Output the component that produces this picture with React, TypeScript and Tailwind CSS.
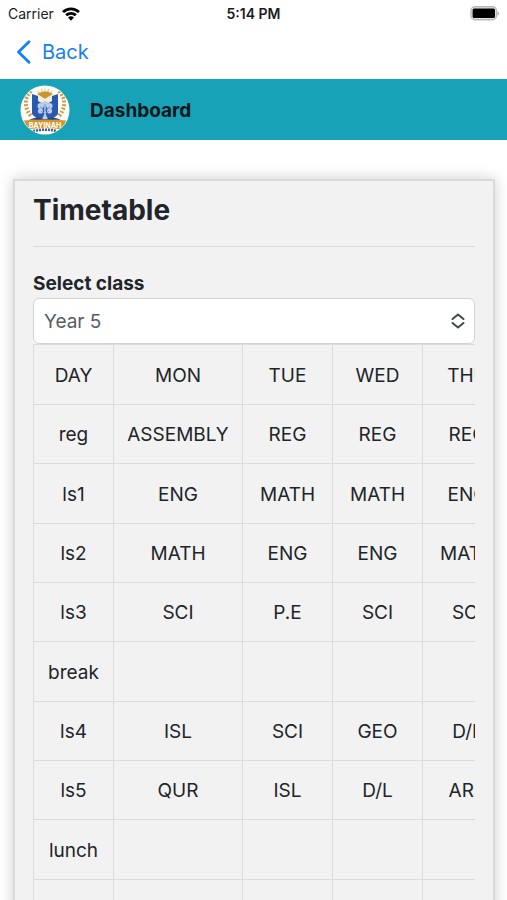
import { useState } from "react";

const days = ["DAY", "MON", "TUE", "WED", "THU", "FRI"];

const lessons = [
  ["reg", "ASSEMBLY", "REG", "REG", "REG", "REG"],
  ["ls1", "ENG", "MATH", "MATH", "ENG", "MATH"],
  ["ls2", "MATH", "ENG", "ENG", "MATH", "ENG"],
  ["ls3", "SCI", "P.E", "SCI", "SCI", "ISL"],
  ["break", "", "", "", "", ""],
  ["ls4", "ISL", "SCI", "GEO", "D/L", "QUR"],
  ["ls5", "QUR", "ISL", "D/L", "ARB", "ARB"],
  ["lunch", "", "", "", "", ""],
  ["ls6", "ARB", "ICT", "HIS", "QUR", ""],
];

function StatusBar() {
  return (
    <div className="grid h-7 shrink-0 grid-cols-3 items-center px-2 text-sm text-[#1c1c1c]">
      <div className="flex items-center gap-2">
        <span>Carrier</span>
        <svg viewBox="0 0 20 15" className="h-[14px] w-[18px]" fill="none" stroke="#000" strokeWidth="3.1">
          <path d="M1.2 5.4a12.4 12.4 0 0 1 17.6 0" />
          <path d="M4.6 9a7.6 7.6 0 0 1 10.8 0" />
          <path d="M10 15 6.7 11.5a4.6 4.6 0 0 1 6.6 0z" fill="#000" stroke="none" />
        </svg>
      </div>
      <span className="text-center font-semibold">5:14 PM</span>
      <svg viewBox="0 0 32 16" className="h-4 w-8 justify-self-end">
        <rect x="4" y="0.8" width="25.5" height="13" rx="4" fill="#e6e6e6" stroke="#b9b9b9" strokeWidth="1.4" />
        <rect x="5.6" y="2.6" width="22.4" height="9.4" rx="1.5" fill="#000" />
        <path d="M30.5 5.2c1.2.5 1.5 1.3 1.500 2.200s-.3 1.700-1.500 2.200z" fill="#a9a9a9" />
      </svg>
    </div>
  );
}

function SchoolLogo() {
  return (
    <svg viewBox="0 0 50 50" className="size-[50px]" role="img" aria-label="Bayinah">
      <defs>
        <clipPath id="seal">
          <circle cx="25" cy="25" r="24" />
        </clipPath>
      </defs>
      <circle cx="25" cy="25" r="24.5" fill="#fdfdfb" />
      <g clipPath="url(#seal)">
        {/* Laurel branches */}
        <g fill="none" stroke="#cfa04a" strokeWidth="4" strokeDasharray="2 1.6">
          <path d="M11 6C4 13 4 24 12 32" />
          <path d="M39 6C46 13 46 24 38 32" />
        </g>
        {/* Rays over the open book */}
        <path d="M17 5l4 3 0-5 3 4 1-5 1 5 3-4 0 5 4-3-3 6H20z" fill="#eccf8f" />
        <path d="M17 9q8-5 16 0l-8 5z" fill="#c8942f" />
        {/* Shield */}
        <path d="M12 9l6 2 7 5 7-5 6-2v20q-3 5-13 6-10-1-13-6z" fill="#2a59b0" />
        <path d="M18 10l7 4 7-4v6l-7 4-7-4z" fill="#f4edda" />
        {/* Tree */}
        <g fill="#bccdea">
          <circle cx="20.5" cy="21" r="3" />
          <circle cx="25" cy="19" r="3" />
          <circle cx="29.5" cy="21" r="3" />
          <circle cx="20.500" cy="26" r="2.6" />
          <circle cx="29.500" cy="26" r="2.6" />
          <path d="M24 20h2v10l2 4h-6l2-4z" />
        </g>
        <path d="M20 21.5l5 4 5-4M21 26l4 3 4-3M25 19v8" fill="none" stroke="#5f85c6" strokeWidth="0.8" />
        <path d="M9 35q9-5 16 0 7-5 16 0-9-1-16 2-7-3-16-2z" fill="#23407f" />
        {/* Name ribbon */}
        <path d="M4 35.500q21-2 42 0l-2 9q-19-3-38 0z" fill="#cf952f" />
        <text x="25" y="42.5" textAnchor="middle" fontSize="7" fontWeight="800" fill="#fff8e6">
          BAYINAH
        </text>
        <path d="M13 46q12-2.500 24 0" fill="none" stroke="#41578d" strokeWidth="2.5" strokeDasharray="2 1" />
      </g>
    </svg>
  );
}

export default function App() {
  const [year, setYear] = useState("Year 5");

  return (
    <div className="flex h-screen flex-col overflow-hidden bg-white font-['Inter',sans-serif] text-[#212529]">
      <StatusBar />

      <nav className="flex h-[51px] shrink-0 items-start px-4 pt-[10px]">
        <a href="#back" className="flex items-center gap-[10px] text-xl text-[#1580f5]">
          <svg viewBox="0 0 16 24" className="h-6 w-4" fill="none" stroke="currentColor" strokeWidth="2.8" strokeLinecap="round" strokeLinejoin="round">
            <path d="M13 1.8 2.5 12 13 22.2" />
          </svg>
          Back
        </a>
      </nav>

      <header className="flex h-[61px] shrink-0 items-center gap-5 bg-[#17a2b8] px-5">
        <SchoolLogo />
        <h1 className="pt-1 text-[19px] font-bold text-[#06171b]">Dashboard</h1>
      </header>

      <main className="min-h-0 flex-1 overflow-hidden pt-[39px] pr-3 pl-[13px]">
        <section className="border-2 border-[#d9dadb] bg-[#f2f2f2] px-[18px] pt-[11px] pb-5 shadow-[0_0_14px_rgba(0,0,0,0.2)]">
          <h2 className="text-[28px] leading-9 font-bold">Timetable</h2>
          <hr className="mt-[18px] mb-[23px] border-[#d9dadb]" />

          <label htmlFor="class" className="block text-[19px] leading-7 font-bold">
            Select class
          </label>
          <div className="relative">
            <select
              id="class"
              value={year}
              onChange={(e) => setYear(e.target.value)}
              className="block h-[46px] w-full appearance-none rounded-md border border-[#ced4da] bg-white px-[10px] pt-[3px] text-[19px] text-[#565d64]"
            >
              <option>Year 4</option>
              <option>Year 5</option>
              <option>Year 6</option>
            </select>
            <svg
              viewBox="0 0 14 16"
              className="pointer-events-none absolute top-[15px] right-[10px] h-4 w-[14px]"
              fill="none"
              stroke="#43484d"
              strokeWidth="2"
              strokeLinecap="round"
              strokeLinejoin="round"
            >
              <path d="M1.5 6 7 1.5 12.5 6M1.5 10 7 14.5 12.5 10" />
            </svg>
          </div>

          <div className="overflow-x-auto">
            <table className="h-[595px] w-[570px] table-fixed border-collapse text-center text-[19px]">
              <colgroup>
                <col className="w-20" />
                <col className="w-[129px]" />
                <col className="w-[90px]" />
                <col className="w-[90px]" />
                <col className="w-[90px]" />
                <col className="w-[90px]" />
              </colgroup>
              <thead>
                <tr>
                  {days.map((day) => (
                    <th key={day} scope="col" className="h-[60px] border border-[#d9dde0] pt-[3px] font-normal">
                      {day}
                    </th>
                  ))}
                </tr>
              </thead>
              <tbody>
                {lessons.map((row) => (
                  <tr key={row[0]}>
                    {row.map((cell, i) => (
                      <td key={i} className="border border-[#d9dde0] pt-[3px]">
                        {cell}
                      </td>
                    ))}
                  </tr>
                ))}
              </tbody>
            </table>
          </div>
        </section>
      </main>
    </div>
  );
}
